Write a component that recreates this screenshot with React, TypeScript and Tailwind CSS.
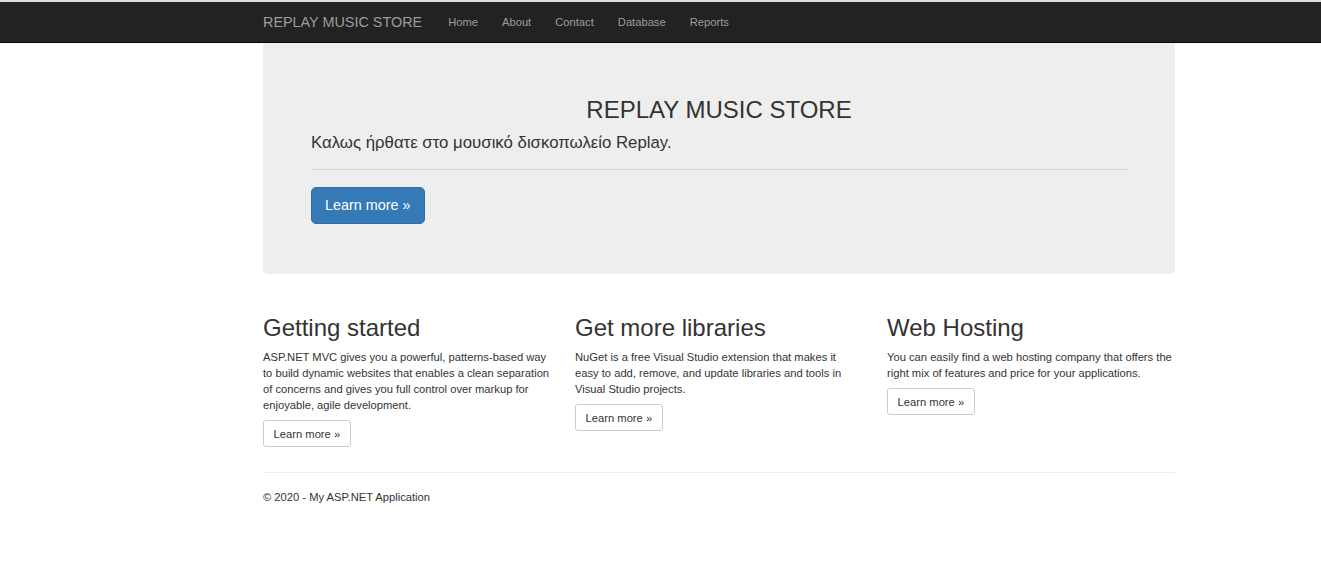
import React from 'react';

const NAV_LINKS = ['Home', 'About', 'Contact', 'Database', 'Reports'];

const FEATURES = [
  {
    title: 'Getting started',
    lines: [
      'ASP.NET MVC gives you a powerful, patterns-based way',
      'to build dynamic websites that enables a clean separation',
      'of concerns and gives you full control over markup for',
      'enjoyable, agile development.',
    ],
  },
  {
    title: 'Get more libraries',
    lines: [
      'NuGet is a free Visual Studio extension that makes it',
      'easy to add, remove, and update libraries and tools in',
      'Visual Studio projects.',
    ],
  },
  {
    title: 'Web Hosting',
    lines: [
      'You can easily find a web hosting company that offers the',
      'right mix of features and price for your applications.',
    ],
  },
];

export default function App() {
  return (
    <div className="min-h-[563px] bg-white text-[#333] text-[11.2px] leading-[16px]" style={{ fontFamily: '"Liberation Sans", Arial, sans-serif' }}>
      {/* top strip + navbar */}
      <div className="h-[2px] bg-[#dcdcdc]" />
      <nav className="h-[41px] bg-[#222] border-b border-[#080808]">
        <div className="ml-[263px] w-[912px] flex items-center h-[40px]">
          <span className="text-[14.4px] text-[#9d9d9d] pr-[14px]">REPLAY MUSIC STORE</span>
          {NAV_LINKS.map((link) => (
            <span key={link} className="px-[12px] text-[11.2px] text-[#9d9d9d]">{link}</span>
          ))}
        </div>
      </nav>

      <div className="ml-[263px] w-[912px]">
        {/* Jumbotron */}
        <div className="bg-[#eee] rounded-b-[5px] px-[48px] pt-[38px] pb-[38px]">
          <h2 className="mt-[16px] mb-[8px] text-[24px] leading-[26.4px] text-center text-[#333]">REPLAY MUSIC STORE</h2>
          <p className="text-[16.8px] leading-[24px] mb-[14px]">Καλως ήρθατε στο μουσικό δισκοπωλείο Replay.</p>
          <hr className="border-0 border-t border-[#d5d5d5] mb-[17px]" />
          <p className="mb-[12px]">
            <span className="inline-block bg-[#337ab7] border border-[#2e6da4] rounded-[5px] text-white text-[14.4px] leading-[19px] px-[13px] py-[8px]">
              Learn more »
            </span>
          </p>
        </div>

        {/* Columns */}
        <div className="grid grid-cols-3 gap-x-[24px] mt-[24px]">
          {FEATURES.map((f) => (
            <div key={f.title}>
              <h2 className="mt-[17px] mb-[7px] text-[24px] leading-[26.4px]">{f.title}</h2>
              <p className="mb-[7px] whitespace-nowrap">
                {f.lines.map((line, i) => (
                  <React.Fragment key={i}>
                    {line}
                    {i < f.lines.length - 1 && <br />}
                  </React.Fragment>
                ))}
              </p>
              <span className="inline-block border border-[#ccc] rounded-[3px] bg-white px-[9.6px] py-[4.8px] leading-[16px]">
                Learn more »
              </span>
            </div>
          ))}
        </div>

        {/* Footer */}
        <hr className="border-0 border-t border-[#eee] mt-[25px] mb-[16px]" />
        <footer>
          <p>© 2020 - My ASP.NET Application</p>
        </footer>
      </div>
    </div>
  );
}
